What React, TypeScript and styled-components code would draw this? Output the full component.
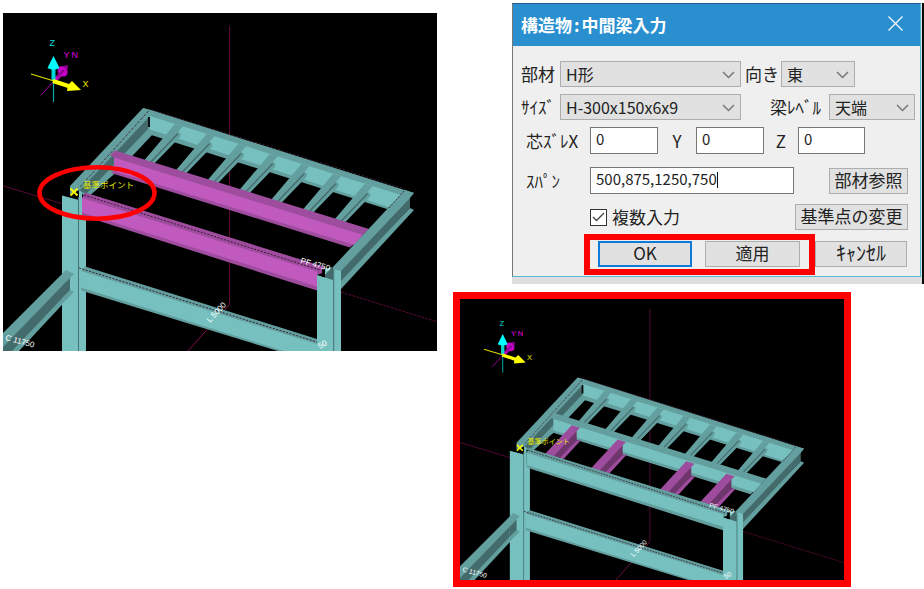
import React from "react";
import styled, { createGlobalStyle } from "styled-components";

const Global = createGlobalStyle`
  * { box-sizing: border-box; }
  body { margin: 0; background: #fff; }
  body, button, input, select {
    font-family: "Noto Sans CJK JP", "Liberation Sans", sans-serif;
    color: #222;
  }
`;

const Page = styled.main`
  display: grid;
  grid-template-columns: 434fr 471fr;
  column-gap: 16px;
  align-items: start;
  padding-left: 3px;
`;

const Viewport = styled.figure`
  margin: 13px 0 0;
  background: #000;
  svg { display: block; width: 100%; height: auto; }
`;

const ResultViewport = styled(Viewport)`
  margin: 8px 73px 0 0;
  border: 7px solid #f00;
`;

const Side = styled.div`
  display: flex;
  flex-direction: column;
`;

const DialogShot = styled.div`
  margin: 3px 0 0 59px;
  background: #dedede;
  border-right: 2px solid #0a0808;
  padding: 0 1px 7px 0;
`;

const Dialog = styled.section`
  background: #efefef;
  border: 1px solid #55b8d4;
  border-left-color: #777;
  border-top-color: #245a91;
`;

const TitleBar = styled.header`
  display: flex;
  align-items: center;
  justify-content: space-between;
  height: 42px;
  padding: 0 17px 0 8px;
  background: #298fcf;
  color: #fff;
`;

const Title = styled.h1`
  margin: 0;
  font-size: 17px;
  line-height: 24px;
  font-weight: 700;
  span { padding: 0 2px; }
`;

const CloseButton = styled.button`
  display: flex;
  padding: 0 0 3px;
  border: 0;
  background: none;
`;

const Body = styled.form`
  padding: 15px 0 1px 8px;
`;

const Row = styled.div<{ $cols: string; $top?: number }>`
  display: grid;
  grid-template-columns: ${(p) => p.$cols};
  align-items: center;
  margin-top: ${(p) => p.$top ?? 0}px;
`;

const Label = styled.label<{ $align?: string; $pad?: string }>`
  font-size: 17px;
  line-height: 24px;
  white-space: nowrap;
  text-align: ${(p) => p.$align ?? "left"};
  padding: ${(p) => p.$pad ?? "0"};
`;

const SelectWrap = styled.div`
  position: relative;
  svg { position: absolute; right: 6px; top: 10px; pointer-events: none; }
`;

const SelectControl = styled.select`
  display: block;
  appearance: none;
  width: 100%;
  height: 26px;
  padding: 0 20px 0 5px;
  border: 1px solid #adadad;
  border-radius: 0;
  background: #e1e1e1;
  font-size: 16px;
  line-height: 24px;
`;

const InputWrap = styled.div`
  position: relative;
`;

const TextInput = styled.input`
  display: block;
  width: 100%;
  height: 27px;
  padding: 0 5px 4px;
  border: 1px solid #777;
  background: #fff;
  font-size: 15px;
  outline: 0;
`;

const Caret = styled.span`
  position: absolute;
  left: 127px;
  top: 5px;
  width: 1px;
  height: 16px;
  background: #111;
`;

const CheckLabel = styled.label`
  display: flex;
  align-items: center;
  gap: 5px;
  font-size: 17px;
  line-height: 24px;
`;

const CheckBox = styled.input`
  appearance: none;
  width: 17px;
  height: 17px;
  margin: 0;
  border: 1px solid #333;
  background: #fff;
`;

const CheckWrap = styled.span`
  position: relative;
  display: flex;
  svg { position: absolute; left: 2px; top: 3px; pointer-events: none; }
`;

const PushButton = styled.button<{ $primary?: boolean; $size?: number }>`
  height: 26px;
  padding: 0 0 2px;
  border: ${(p) => (p.$primary ? "2px solid #0f7bd6" : "1px solid #adadad")};
  background: #e1e1e1;
  font-size: ${(p) => p.$size ?? 17}px;
  line-height: 20px;
  white-space: nowrap;
`;

const Actions = styled.div`
  display: flex;
  margin: 4px 0 0 63px;
`;

const Highlight = styled.div`
  display: grid;
  grid-template-columns: 94px 95px;
  gap: 13px;
  width: 231px;
  padding: 1px 9px 2px 8px;
  border: 6px solid #f00;
`;

const CancelSlot = styled.div`
  display: grid;
  width: 92px;
  padding-top: 7px;
  align-content: start;
`;

const Chevron = () => (
  <svg width="13" height="8" viewBox="0 0 13 8" fill="none" stroke="#777" strokeWidth="1.500">
    <path d="M1 1 L6.500 6.500 L12 1" />
  </svg>
);

type SelectProps = { id: string; options: string[] };
const Select = ({ id, options }: SelectProps) => (
  <SelectWrap>
    <SelectControl id={id} defaultValue={options[0]}>
      {options.map((o) => (
        <option key={o}>{o}</option>
      ))}
    </SelectControl>
    <Chevron />
  </SelectWrap>
);

type Tone = { light: string; mid: string; dark: string };
const TEAL: Tone = { light: "#76c1bf", mid: "#639f9e", dark: "#446b6c" };
const PINK: Tone = { light: "#c05abe", mid: "#9e4c9d", dark: "#6f366e" };

const JOISTS = [0, 1, 2, 3, 4, 5, 6];
const NEW_BEAMS = [
  [0, 0],
  [55, 17],
  [137, 43],
  [185, 58],
];

const Axes = () => (
  <g fontFamily="Liberation Sans, sans-serif" fontSize="9">
    <path d="M41 95 L54 81" stroke="#b000b0" strokeWidth="1" />
    <path d="M54 81 L63 72" stroke="#c000c0" strokeWidth="4" />
    <path d="M58 67 L68 65 L67 75 L60 76 Z" fill="#8a008a" />
    <ellipse cx="62.500" cy="71.500" rx="4.500" ry="5.500" fill="#c400c4" transform="rotate(-40 62.500 71.500)" />
    <path d="M57 77 L64 70" stroke="#8a008a" strokeWidth="2" />
    <path d="M53.500 81 V102" stroke="#00a8a8" strokeWidth="1.200" />
    <path d="M53.500 81 V68" stroke="#00d8d8" strokeWidth="4" />
    <path d="M53.500 56 L59.500 68 Q53.500 71 47.500 68 Z" fill="#0ff" />
    <path d="M31 74 L54 81" stroke="#dcdc00" strokeWidth="1.200" />
    <path d="M53 81 L70 86.500" stroke="#ff0" strokeWidth="4" />
    <path d="M81 90 L67 91 Q67 85 72 81 Z" fill="#ff0" />
    <text x="49.500" y="46" fill="#0dd">Z</text>
    <text x="63.500" y="58" fill="#e000e0">Y</text>
    <text x="71.500" y="58" fill="#e000e0">N</text>
    <text x="82.500" y="87" fill="#ee0">X</text>
  </g>
);

const Frame = ({ result }: { result?: boolean }) => {
  const beam = result ? TEAL : PINK;
  return (
    <g>
      <g stroke="#5c0a38" fill="none">
        <path d="M229.500 26 V305" />
        <path d="M229 305 L188 351" stroke="#850f50" />
        <path d="M2 185.500 L63 204" />
        <path d="M341 292 L470 332" strokeDasharray="3 1" />
      </g>

      {/* back beam */}
      <path d="M143 108 L151 110 L414 193 L402 198 L387 209 L148 134 L148 113 Z" fill={TEAL.mid} />
      <path d="M150 116 L401 195 L388 207 L150 129.500 Z" fill={TEAL.light} />
      <path d="M152 110 L405 189" stroke="#5a3050" strokeWidth="0.700" strokeDasharray="2 2" />

      {/* side beam on the left */}
      <path d="M148 128 L153 134 L120 169 L87 198 L80 192 Z" fill={TEAL.mid} />
      <path d="M148 116 V129 L87 193 L80 192 L80 188 Z" fill={TEAL.dark} />
      <path d="M143 108 L151 111 L149 117 L80 190 L70 194 V186 Z" fill={TEAL.mid} />
      <path d="M148.500 111 L80 187" stroke="#3a1a30" strokeWidth="0.800" strokeDasharray="3 1.500" />
      <path d="M149 117 V127" stroke="#000" strokeWidth="1.800" />

      {JOISTS.map((k) => (
        <g key={k} transform={`translate(${k * 31.6} ${k * 10})`}>
          <path d="M175 124 L183 126 L178 132 L181 134 L180 137 L151 167 L142 163 Z" fill={TEAL.mid} />
          <path d="M178 133.500 L148 165" stroke={TEAL.dark} strokeWidth="1.300" />
        </g>
      ))}

      {/* intermediate beam */}
      <path d="M115 150.500 L369 229 L350 247.500 L111 173 L115 170 V158 L110 155 Z" fill={beam.mid} />
      <path d="M114 157.500 L363 235 L354 245 L114 171 Z" fill={beam.light} />

      {/* side beam on the right */}
      <path d="M410 208 L414 210 L341 289 V278 Z" fill={TEAL.mid} />
      <path d="M410 197 V208 L341 281 V269 Z" fill={TEAL.dark} />
      <path d="M405 190 L414 193 L410 198 L341 271 L333 272 L325 277 L333 267 Z" fill={TEAL.mid} />
      <path d="M404 191 L389 208" stroke="#3a1a30" strokeWidth="0.800" strokeDasharray="2 1.500" />

      {result &&
        NEW_BEAMS.map(([x, y]) => (
          <g key={x} transform={`translate(${x} ${y})`}>
            <path d="M142 183 L147 183 L123 209 L114 209 Z" fill={PINK.mid} />
            <path d="M142 171 V183 L117 209 L108 205 Z" fill={PINK.dark} />
            <path d="M136 165 L146 168 L142 172 L111 206 L100 204 Z" fill={PINK.mid} />
          </g>
        ))}

      {/* side beam running off to the lower left */}
      <path d="M69 289 L74 292 L19 351 H8 Z" fill={TEAL.mid} />
      <path d="M70 278 V290 L12 351 H2 V347 Z" fill={TEAL.dark} />
      <path d="M66 270 L74 274 L2 348 V334 Z" fill={TEAL.mid} />

      {/* columns */}
      <path d="M62 195.500 L79 200 V190 L82 192 V212 H86 V351 H62 Z" fill={TEAL.light} />
      <path d="M66 270 L74 274 L70 278 V290 L74 292 L62 304 V274 Z" fill={TEAL.mid} />
      <path d="M70 278 V290 L62 298 V286 Z" fill={TEAL.dark} />
      <path d="M78.500 197 V351" stroke="#426968" strokeWidth="0.900" />
      <path d="M325 268 L333 268 V280 H325 Z" fill={TEAL.dark} />
      <path d="M325 269 L332 267 L325 275 Z" fill={TEAL.light} />
      <path d="M317 275 L333 280 V269 L341 271 V351 H317 Z" fill={TEAL.light} />
      <path d="M333.700 269 V351" stroke="#426968" strokeWidth="0.900" />

      {/* front beam */}
      <path d="M85 192.500 L325 267 V272 L317 275 V290.500 L82 215.500 V198 Z" fill={beam.mid} />
      <path d="M82 198 L317 271.500 V286.500 L82 212.500 Z" fill={beam.light} />
      <path d="M84 195 L320 270" stroke="#32102b" strokeWidth="0.900" strokeDasharray="2 1.500" />
      <path d="M323.500 269 V277" stroke="#000" strokeWidth="3" />

      {/* lower beam */}
      <path d="M85 266.500 L317 339 V351 H278 L81 290.500 L81 271 Z" fill={TEAL.mid} />
      <path d="M81 271 L317 344 V351 H284 L81 287.500 Z" fill={TEAL.light} />
      <path d="M79 268 L317 342" stroke="#32102b" strokeWidth="0.900" strokeDasharray="2 1.500" />

      <path d="M70.500 188.500 L77.500 195.500 M77.500 188.500 L70.500 195.500" stroke="#ff0" strokeWidth="1.800" />
      <text x="83" y="187.500" fontSize="8.500" fill="#e6e600" fontFamily="Noto Sans CJK JP, sans-serif">基準ポイント</text>
      <g fill="#fff" fontFamily="Liberation Sans, sans-serif" fontSize="8">
        <text transform="translate(300 263) rotate(15)">PF 4750</text>
        <text transform="translate(210 323) rotate(-47)">L 5000</text>
        <text transform="translate(5 340) rotate(15)">C 11750</text>
        <text transform="translate(320 349) rotate(-30)">50</text>
      </g>
      <Axes />
    </g>
  );
};

export default function App() {
  return (
    <>
      <Global />
      <Page>
        <Viewport>
          <svg viewBox="3 13 434 338" role="img" aria-label="中間梁">
            <Frame />
            <ellipse cx="97" cy="193" rx="57.500" ry="25.700" fill="none" stroke="#f00" strokeWidth="4.600" />
          </svg>
        </Viewport>
        <Side>
          <DialogShot>
            <Dialog>
              <TitleBar>
                <Title>構造物<span>:</span>中間梁入力</Title>
                <CloseButton type="button" aria-label="閉じる">
                  <svg width="15" height="15" viewBox="0 0 15 15" stroke="#fff" strokeWidth="1.200">
                    <path d="M0.500 0.500 L14.500 14.500 M14.500 0.500 L0.500 14.500" />
                  </svg>
                </CloseButton>
              </TitleBar>
              <Body onSubmit={(e) => e.preventDefault()}>
                <Row $cols="39px 181px 40px 74px">
                  <Label htmlFor="member">部材</Label>
                  <Select id="member" options={["H形"]} />
                  <Label htmlFor="direction" $pad="0 0 0 4px">向き</Label>
                  <Select id="direction" options={["東"]} />
                </Row>
                <Row $cols="39px 181px 88px 86px" $top={7}>
                  <Label htmlFor="size">ｻｲｽﾞ</Label>
                  <Select id="size" options={["H-300x150x6x9"]} />
                  <Label htmlFor="level" $align="right" $pad="0 8px 0 0">梁ﾚﾍﾞﾙ</Label>
                  <Select id="level" options={["天端"]} />
                </Row>
                <Row $cols="69px 68px 38px 68px 34px 67px" $top={7}>
                  <Label htmlFor="dx" $pad="0 0 0 5px">芯ｽﾞﾚX</Label>
                  <TextInput id="dx" defaultValue="0" />
                  <Label htmlFor="dy" $align="center">Y</Label>
                  <TextInput id="dy" defaultValue="0" />
                  <Label htmlFor="dz" $align="center">Z</Label>
                  <TextInput id="dz" defaultValue="0" />
                </Row>
                <Row $cols="69px 204px 35px 79px" $top={13}>
                  <Label htmlFor="span" $pad="0 0 0 5px">ｽﾊﾟﾝ</Label>
                  <InputWrap>
                    <TextInput id="span" defaultValue="500,875,1250,750" />
                    <Caret />
                  </InputWrap>
                  <span />
                  <PushButton type="button">部材参照</PushButton>
                </Row>
                <Row $cols="69px 205px 113px" $top={10}>
                  <span />
                  <CheckLabel>
                    <CheckWrap>
                      <CheckBox type="checkbox" defaultChecked />
                      <svg width="13" height="11" viewBox="0 0 13 11" fill="none" stroke="#444" strokeWidth="1.300">
                        <path d="M1 5 L4.500 8.500 L12 1" />
                      </svg>
                    </CheckWrap>
                    複数入力
                  </CheckLabel>
                  <PushButton type="button">基準点の変更</PushButton>
                </Row>
                <Actions>
                  <Highlight>
                    <PushButton type="submit" $primary>OK</PushButton>
                    <PushButton type="button">適用</PushButton>
                  </Highlight>
                  <CancelSlot>
                    <PushButton type="button" $size={20}>ｷｬﾝｾﾙ</PushButton>
                  </CancelSlot>
                </Actions>
              </Body>
            </Dialog>
          </DialogShot>
          <ResultViewport>
            <svg viewBox="460 299 384 281" role="img" aria-label="複数入力の結果">
              <g transform="translate(458 287.300) scale(0.836)">
                <Frame result />
              </g>
            </svg>
          </ResultViewport>
        </Side>
      </Page>
    </>
  );
}
